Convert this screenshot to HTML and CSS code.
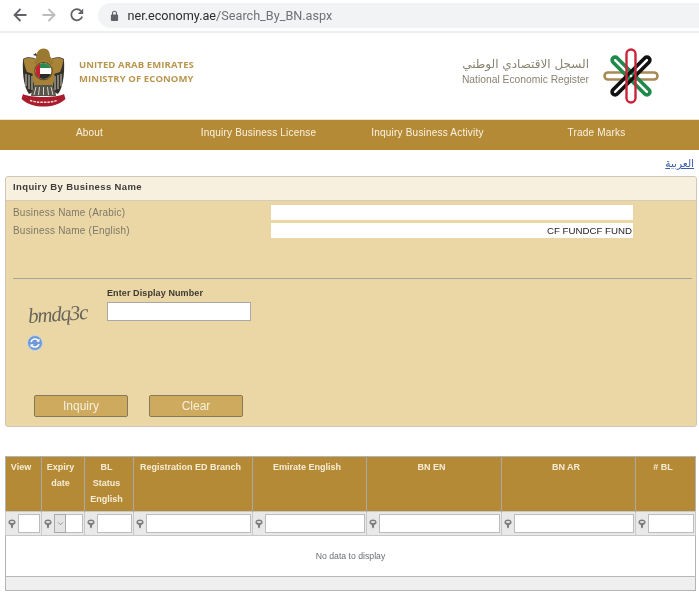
FILE: index.html
```html
<!DOCTYPE html>
<html lang="en">
<head>
<meta charset="utf-8">
<title>Search By Business Name</title>
<link rel="stylesheet" href="styles.css">
</head>
<body>
<div class="page">
  <div class="browser">
    <svg class="bicon" viewBox="0 0 16 16"><path d="M14.500 8H3M8.500 2 2.500 8l6 6" fill="none" stroke="#5f6368" stroke-width="1.800"/></svg>
    <svg class="bicon" viewBox="0 0 16 16"><path d="M1.500 8H13M7.500 2l6 6-6 6" fill="none" stroke="#babcbe" stroke-width="1.800"/></svg>
    <svg class="bicon" viewBox="0 0 16 16"><path d="M13.200 9.500A5.600 5.600 0 1 1 12 3.900" fill="none" stroke="#5f6368" stroke-width="1.800"/><path d="M14.200 1.500v5.400H8.800z" fill="#5f6368"/></svg>
    <div class="omnibox">
      <svg class="lock" viewBox="0 0 10 12"><rect x="1" y="5" width="8" height="7" rx="1" fill="#5f6368"/><path d="M2.800 5.500V3.400a2.200 2.200 0 0 1 4.400 0v2.100" fill="none" stroke="#5f6368" stroke-width="1.200"/></svg>
      <span class="url"><span class="host">ner.economy.ae</span>/Search_By_BN.aspx</span>
    </div>
  </div>

  <header class="masthead">
    <div class="brand">
      <svg class="emblem" viewBox="0 0 46 60">
        <defs>
          <clipPath id="disc"><circle cx="22.500" cy="24" r="8"/></clipPath>
          <g id="wing">
            <path d="M2 12C6 9 12 10 18 13V42L8 47C4 42 1 30 2 12z" fill="#35322b"/>
            <path d="M2.500 12.500C7 10 13 11 19 14V29L6 25C4 21 3 16 2.500 12.500z" fill="#a88438"/>
            <path d="M5 27v12M8 28v14M11 29v14M14 29v13" stroke="#cfcbbd" stroke-width="1"/>
          </g>
        </defs>
        <use href="#wing"/>
        <use href="#wing" transform="matrix(-1 0 0 1 45 0)"/>
        <path d="M15 12C15 5 18 1.500 22.500 1.500C27 1.500 29 5 29 9C31 12 32 15 32 17L13 17z" fill="#9a7a30"/>
        <path d="M15 6l-3 2 4 1z" fill="#3d3526"/>
        <ellipse cx="22.500" cy="29" rx="11" ry="16" fill="#a68236"/>
        <path d="M14 38C12 42 10 46 10 49H35C35 46 33 42 31 38z" fill="#57544c"/>
        <path d="M15 40l-2 8M18.500 40l-1 8M22.500 40v8M26.500 40l1 8M30 40l2 8" stroke="#d8d4c8" stroke-width="1"/>
        <circle cx="22.500" cy="24" r="9.300" fill="#6a4e1e"/>
        <g clip-path="url(#disc)">
          <rect x="14" y="15" width="18" height="18" fill="#fff"/>
          <rect x="14" y="15" width="18" height="6" fill="#2d8a4e"/>
          <rect x="14" y="27" width="18" height="6" fill="#2b2b2b"/>
          <rect x="14" y="15" width="5" height="18" fill="#c8202f"/>
        </g>
        <path d="M2 47C8 51 37 51 43 47L44.500 52C38 58 30 59.500 22.500 59.500C15 59.500 7 58 .5 52z" fill="#a81c2c"/>
        <path d="M9 53.500C17 56 28 56 36 53.500" fill="none" stroke="#f4d9d9" stroke-width="1.500" stroke-dasharray="2.500 1"/>
      </svg>
      <div class="brand-text"><span>UNITED ARAB EMIRATES</span><span>MINISTRY OF ECONOMY</span></div>
    </div>
    <div class="register">
      <div class="register-text"><span class="reg-ar" lang="ar" dir="rtl">السجل الاقتصادي الوطني</span><span class="reg-en">National Economic Register</span></div>
      <svg class="star" viewBox="0 0 56 56">
        <rect x="1.500" y="24.500" width="53" height="7" rx="3.500" fill="none" stroke="#a98a55" stroke-width="2.600"/>
        <rect x="-3" y="-25.500" width="6" height="51" rx="3" fill="none" stroke="#1f8a4c" stroke-width="3.600" transform="translate(28 28) rotate(-45)"/>
        <rect x="-3" y="-25.500" width="6" height="51" rx="3" fill="none" stroke="#111" stroke-width="3.600" transform="translate(28 28) rotate(45)"/>
        <rect x="23.500" y="1.500" width="9" height="53" rx="4.500" fill="none" stroke="#c9253a" stroke-width="2.400"/>
      </svg>
    </div>
  </header>

  <nav class="mainnav">
    <a>About</a><a>Inquiry Business License</a><a>Inquiry Business Activity</a><a>Trade Marks</a>
  </nav>

  <div class="lang"><a lang="ar" dir="rtl">العربية</a></div>

  <section class="panel">
    <h2 class="panel-title">Inquiry By Business Name</h2>
    <div class="panel-body">
      <div class="fields">
        <label class="field-label">Business Name (Arabic)</label><input class="field-input" type="text">
        <label class="field-label">Business Name (English)</label><input class="field-input value" type="text" value="CF FUNDCF FUND">
      </div>
      <hr class="rule">
      <div class="captcha">
        <div class="captcha-side">
          <span class="captcha-img">bmdq3c</span>
          <svg class="refresh" viewBox="0 0 16 16">
            <circle cx="8" cy="8" r="7.500" fill="#6f9ad6" stroke="#c9d5e4"/>
            <path d="M4 7a4.200 4.200 0 0 1 7.300-1.500M12 9a4.200 4.200 0 0 1-7.300 1.500" fill="none" stroke="#fff" stroke-width="1.500"/>
            <path d="M12.500 3.500v3.300H9.200zM3.500 12.500V9.200h3.300z" fill="#fff"/>
          </svg>
        </div>
        <div class="captcha-entry">
          <label class="captcha-label">Enter Display Number</label>
          <input class="captcha-input" type="text">
        </div>
      </div>
      <div class="actions">
        <button class="btn" type="button">Inquiry</button>
        <button class="btn" type="button">Clear</button>
      </div>
    </div>
  </section>

  <table class="grid">
    <colgroup><col class="c1"><col class="c2"><col class="c3"><col class="c4"><col class="c5"><col class="c6"><col class="c7"><col class="c8"></colgroup>
    <thead>
      <tr class="heads">
        <th>View</th><th>Expiry date</th><th>BL<br>Status<br>English</th><th>Registration ED Branch</th><th>Emirate English</th><th>BN EN</th><th>BN AR</th><th># BL</th>
      </tr>
      <tr class="filters">
        <td><div class="flt"><svg class="fi" viewBox="0 0 10 12"><use href="#funnel"/></svg><input class="fin"></div></td>
        <td><div class="flt"><svg class="fi" viewBox="0 0 10 12"><use href="#funnel"/></svg><span class="drop"><svg viewBox="0 0 8 6"><path d="M1 1.500 4 4.500 7 1.500" fill="none" stroke="#8a8a8a"/></svg></span><input class="fin joined"></div></td>
        <td><div class="flt"><svg class="fi" viewBox="0 0 10 12"><use href="#funnel"/></svg><input class="fin"></div></td>
        <td><div class="flt"><svg class="fi" viewBox="0 0 10 12"><use href="#funnel"/></svg><input class="fin"></div></td>
        <td><div class="flt"><svg class="fi" viewBox="0 0 10 12"><use href="#funnel"/></svg><input class="fin"></div></td>
        <td><div class="flt"><svg class="fi" viewBox="0 0 10 12"><use href="#funnel"/></svg><input class="fin"></div></td>
        <td><div class="flt"><svg class="fi" viewBox="0 0 10 12"><use href="#funnel"/></svg><input class="fin"></div></td>
        <td><div class="flt"><svg class="fi" viewBox="0 0 10 12"><use href="#funnel"/></svg><input class="fin"></div></td>
      </tr>
    </thead>
    <tbody>
      <tr class="empty"><td colspan="8">No data to display</td></tr>
    </tbody>
    <tfoot>
      <tr class="foot"><td colspan="8"></td></tr>
    </tfoot>
  </table>
  <svg class="defs" width="0" height="0"><defs><g id="funnel"><path d="M5 .5C7.800.5 9.500 2 9.500 4C9.500 5.800 7 6.500 6.300 7.500V10L5 11.500 3.700 10V7.500C3 6.500.5 5.800.5 4C.5 2 2.200.5 5 .5z" fill="#7d7d7d"/><ellipse cx="5" cy="3.500" rx="2.800" ry="1.300" fill="#e4e4e4"/></g></defs></svg>
</div>
</body>
</html>
```

FILE: styles.css
```css
* { box-sizing: border-box; }
html, body { margin: 0; padding: 0; background: #fff; overflow: hidden; }
body { font-family: "Liberation Sans", Arial, sans-serif; }
.page { width: 699px; height: 600px; overflow: hidden; filter: blur(0.5px); }

.browser { height: 33px; display: flex; align-items: center; padding: 1px 0 2px 12px; border-bottom: 2px solid #eeeeee; background: #fff; }
.bicon { width: 16px; height: 16px; margin-right: 12.500px; }
.omnibox { flex: 1; height: 25px; background: #f1f3f4; border-radius: 13px 0 0 13px; display: flex; align-items: center; padding-left: 12px; }
.lock { width: 9px; height: 11px; margin-right: 9px; }
.url { font-family: Roboto, "Liberation Sans", sans-serif; font-size: 12.650px; color: #6f7276; }
.host { color: #2b2d30; }

.masthead { height: 86px; display: flex; justify-content: space-between; align-items: flex-start; background: #fff; }
.brand { display: flex; align-items: center; margin: 14px 0 0 21px; }
.emblem { width: 46px; height: 60px; }
.brand-text { display: flex; flex-direction: column; margin: 0 0 11px 12px; font-family: "Open Sans", sans-serif; font-weight: 700; font-size: 9.500px; line-height: 14px; color: #b9964f; letter-spacing: .1px; }
.register { display: flex; margin: 15px 40px 0 0; align-items: center; }
.register-text { display: flex; flex-direction: column; align-items: flex-end; color: #8a8371; margin: 0 14px 10px 0; }
.reg-ar { font-family: "DejaVu Sans", sans-serif; font-size: 12px; line-height: 18px; }
.reg-en { font-size: 10.300px; line-height: 14px; }
.star { width: 56px; height: 56px; }

.mainnav { height: 31px; background: #b58a36; border-top: 1px solid #efe4cf; padding-left: 5px; display: grid; grid-template-columns: repeat(4, 169px); align-items: center; }
.mainnav a { text-align: center; color: #fbf3e2; font-size: 10px; letter-spacing: .2px; padding-bottom: 6px; }

.lang { height: 26px; text-align: right; padding: 7px 5px 0 0; font-family: "DejaVu Sans", sans-serif; font-size: 10.500px; line-height: 13px; }
.lang a { color: #3a5fae; text-decoration: underline; }

.panel { width: 692px; height: 251px; margin-left: 5px; border: 1px solid #cfc8b6; border-radius: 3px; background: #ebd7a6; overflow: hidden; }
.panel-title { height: 24px; margin: 0; padding-left: 7px; background: #f8f0df; border-bottom: 1px solid #d6cdb8; font-size: 9.500px; line-height: 20px; font-weight: 700; color: #3c3c3c; letter-spacing: .38px; }
.panel-body { padding: 4px 4px 0 7px; }
.fields { display: grid; grid-template-columns: 258px 362px; grid-auto-rows: 18px; }
.field-label { font-size: 10px; line-height: 15px; color: #7e7968; letter-spacing: .2px; }
.field-input { width: 362px; height: 15px; border: 0; background: #fff; padding: 0 1px; font: 9.700px "Liberation Sans", sans-serif; color: #222; }
.value { text-align: right; }
.rule { margin: 37px 0 0; border: 0; height: 1px; background: #a5a59e; }
.captcha { display: flex; margin-top: 9px; }
.captcha-side { width: 94px; display: flex; flex-direction: column; align-items: flex-start; padding: 14px 0 0 15px; }
.captcha-img { font-family: "Liberation Serif", serif; font-style: italic; font-size: 21px; line-height: 24px; letter-spacing: -1.200px; color: #6a665c; transform: rotate(-4deg); }
.refresh { width: 16px; height: 16px; margin-top: 9px; margin-left: -1px; }
.captcha-entry { display: flex; flex-direction: column; }
.captcha-label { font-size: 9px; line-height: 11px; font-weight: 700; color: #3d3a33; letter-spacing: .1px; }
.captcha-input { width: 144px; height: 19px; margin-top: 3px; border: 1px solid #a8a8a4; background: #fff; padding: 0; }
.actions { display: flex; gap: 21px; margin-top: 44px; padding-left: 21px; }
.btn { width: 94px; height: 22px; padding: 0; background: #cdaa5e; border: 1px solid #85795a; border-radius: 2px; color: #f7efdc; font: 12px "Liberation Sans", sans-serif; }

.grid { width: 690px; margin: 29px 0 0 5px; table-layout: fixed; border-collapse: collapse; border: 1px solid #b4b4b4; }
.c1 { width: 36px; } .c2 { width: 43px; } .c3 { width: 49px; } .c4 { width: 119px; } .c5 { width: 114px; } .c6 { width: 135px; } .c7 { width: 134px; } .c8 { width: 60px; }
.heads th { height: 55px; padding: 2px 6px 0 1px; background: #b58a36; border-left: 1px solid #a9a9a9; vertical-align: top; text-align: center; font-size: 9px; line-height: 16px; font-weight: 700; color: #f6ecd6; }
.heads th:first-child { border-left: 0; }
.filters td { height: 24px; padding: 0; background: #e9e9e9; border: 1px solid #c8c8c8; border-left: 1px solid #cfcfcf; }
.flt { display: flex; align-items: center; height: 22px; padding-right: 1px; }
.fi { width: 8px; height: 10px; flex: none; margin: 0 2px; }
.fin { flex: 1; min-width: 0; width: 10px; height: 19px; padding: 0; border: 1px solid #bcbcbc; background: #fff; }
.joined { border-left: 0; }
.drop { flex: none; width: 12px; height: 19px; background: #e4e4e4; border: 1px solid #a9a9a9; display: flex; align-items: center; justify-content: center; }
.drop svg { width: 7px; height: 5px; }
.empty td { height: 41px; text-align: center; background: #fff; font-size: 8.700px; color: #6b6f76; padding: 0; }
.foot td { height: 14px; background: #efefef; border-top: 1px solid #b8b8b8; padding: 0; }
.defs { position: absolute; }
```
